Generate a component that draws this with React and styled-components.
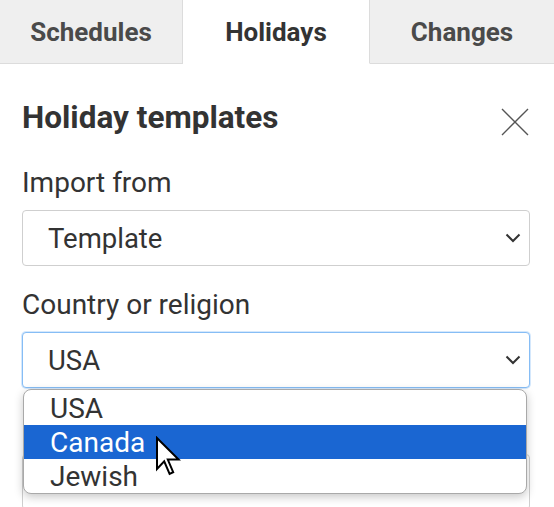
import styled, { createGlobalStyle } from "styled-components";

const Global = createGlobalStyle`
  html, body {
    margin: 0;
    background: #fff;
    font-family: Roboto, "Liberation Sans", sans-serif;
    color: #333;
  }
`;

const Page = styled.div`
  width: 554px;
  height: 507px;
  overflow: hidden;
  position: relative;
`;

const Tabs = styled.div`
  display: grid;
  grid-template-columns: 183px 187px 1fr;
  height: 64px;
`;

const Tab = styled.div`
  display: flex;
  align-items: center;
  justify-content: center;
  font-size: 26px;
  font-weight: 700;
  color: ${(p) => (p.$active ? "#333" : "#4a4a4a")};
  background: ${(p) => (p.$active ? "#fff" : "#efefef")};
  border-bottom: ${(p) => (p.$active ? "1px solid transparent" : "1px solid #dcdcdc")};
  border-right: ${(p) => (p.$last ? "none" : "1px solid #dcdcdc")};
`;

const Body = styled.div`
  padding: 24px 24px 0 22px;
  display: flex;
  flex-direction: column;
`;

const Header = styled.div`
  display: flex;
  justify-content: space-between;
  align-items: center;
  height: 58px;
  margin-bottom: 22px;
`;

const Title = styled.h2`
  margin: 0;
  font-size: 31.5px;
  font-weight: 700;
  color: #333;
`;

const Close = styled.button`
  background: none;
  border: none;
  padding: 0;
  margin: 10px 1px 0 0;
  width: 28px;
  height: 28px;
  cursor: pointer;
  display: flex;
`;

const Label = styled.label`
  font-size: 28px;
  color: #333;
  line-height: 30px;
  height: 30px;
  margin-bottom: 12px;
`;

const Field = styled.div`
  position: relative;
  margin-bottom: 24px;
`;

const SelectBox = styled.div`
  height: 56px;
  box-sizing: border-box;
  border: 1px solid ${(p) => (p.$focus ? "#86bdf5" : "#cfcfcf")};
  box-shadow: ${(p) => (p.$focus ? "0 0 0 1px rgba(134, 189, 245, 0.35)" : "none")};
  border-radius: 4px;
  display: flex;
  align-items: center;
  justify-content: space-between;
  padding: 0 8px 0 25px;
  font-size: 27.5px;
  color: #333;
  background: #fff;
`;

const Menu = styled.ul`
  position: absolute;
  left: 1px;
  right: 3px;
  top: 57px;
  margin: 0;
  padding: 1px 0 0;
  list-style: none;
  background: #fff;
  border: 1px solid #a9a9a9;
  border-radius: 8px;
  box-shadow: 0 3px 10px rgba(0, 0, 0, 0.22);
  overflow: hidden;
  z-index: 2;
`;

const Option = styled.li`
  height: 34px;
  display: flex;
  align-items: center;
  padding-left: 26px;
  font-size: 28px;
  color: ${(p) => (p.$selected ? "#fff" : "#333")};
  background: ${(p) => (p.$selected ? "#1a66d2" : "transparent")};
`;

const Cursor = styled.svg`
  position: absolute;
  left: 155px;
  top: 436px;
  z-index: 3;
`;

const Chevron = () => (
  <svg width="16" height="10" viewBox="0 0 16 10">
    <path d="M1.5 1.5l6.5 6.5 6.5-6.5" fill="none" stroke="#333" strokeWidth="2" />
  </svg>
);

const App = () => {
  return (
    <>
      <Global />
      <Page>
        <Tabs>
          <Tab>Schedules</Tab>
          <Tab $active>Holidays</Tab>
          <Tab $last>Changes</Tab>
        </Tabs>
        <Body>
          <Header>
            <Title>Holiday templates</Title>
            <Close aria-label="Close">
              <svg width="28" height="28" viewBox="0 0 28 28">
                <path d="M1 1l26 26M27 1L1 27" stroke="#555" strokeWidth="1.4" />
              </svg>
            </Close>
          </Header>
          <Label>Import from</Label>
          <Field>
            <SelectBox>
              Template
              <Chevron />
            </SelectBox>
          </Field>
          <Label>Country or religion</Label>
          <Field>
            <SelectBox $focus>
              USA
              <Chevron />
            </SelectBox>
            <Menu>
              <Option>USA</Option>
              <Option $selected>Canada</Option>
              <Option>Jewish</Option>
            </Menu>
          </Field>
          <Label as="div" />
          <Field>
            <SelectBox />
          </Field>
        </Body>
        <Cursor width="26" height="40" viewBox="0 0 26 40">
          <path
            d="M2 2 L2 33 L9.2 25.4 L14.6 38 L18.2 36.2 L12.8 23.6 L23.6 23.6 Z"
            fill="#fff"
            stroke="#000"
            strokeWidth="2"
            strokeLinejoin="miter"
          />
        </Cursor>
      </Page>
    </>
  );
};

export default App;
